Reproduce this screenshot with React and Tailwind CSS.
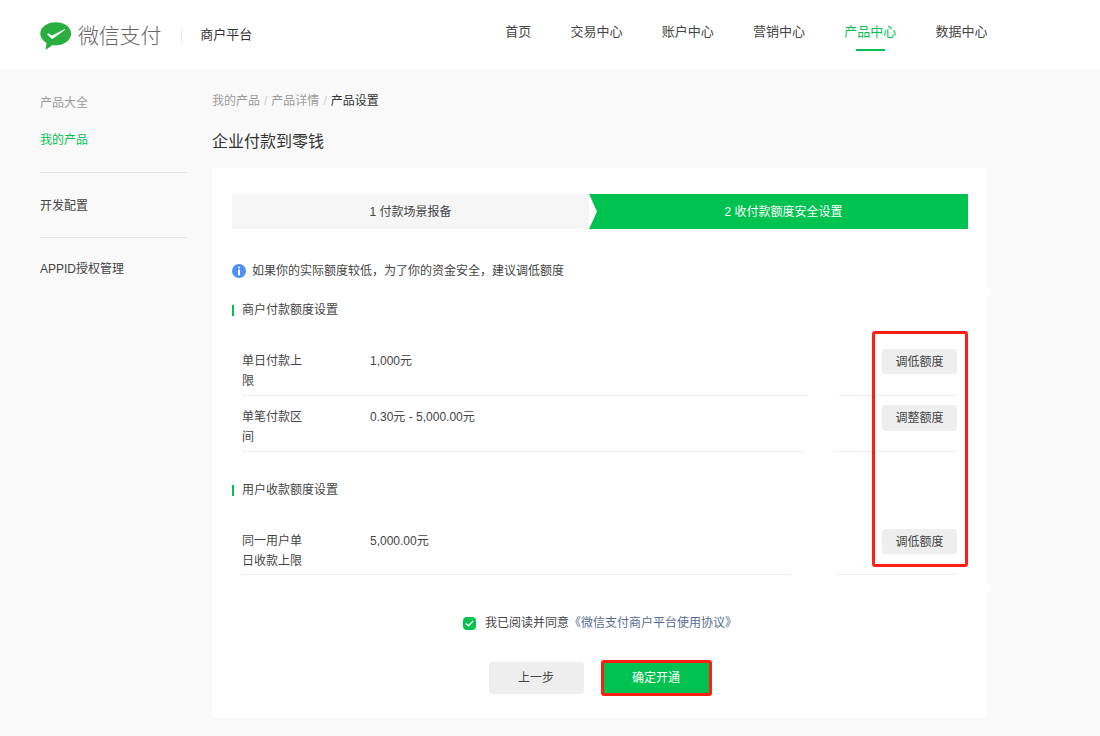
const GREEN = "text-[#00c250]";

const NAV = ["首页", "交易中心", "账户中心", "营销中心", "产品中心", "数据中心"];

const Logo = () => (
  <svg width="32" height="28" viewBox="0 0 32 28" className="shrink-0">
    <path d="M15.7 0.3C7.2 0.3 0.3 5.2 0.3 11.6c0 3.9 2.5 7.2 6.2 9.3l-0.7 5.6c-0.1 0.8 0.5 1 1.1 0.6l5.7-4c1 0.2 2 0.3 3.1 0.3 8.5 0 15.4-5.100 15.400-11.800S24.200 0.300 15.700 0.300z" fill="#2aae3f" />
    <path d="M7 12.200l1.200-1 3.900 2.400L24.700 7l0.600 0.700-12.600 9.100c-0.500 0.300-1 0.200-1.300-0.200z" fill="#fff" />
  </svg>
);

const InfoIcon = () => (
  <svg width="14" height="14" viewBox="0 0 14 14" className="shrink-0">
    <circle cx="7" cy="7" r="7" fill="#4f8ff7" />
    <rect x="6" y="2.600" width="2" height="2" rx="1" fill="#fff" />
    <rect x="6" y="5.600" width="2" height="5.800" fill="#fff" />
  </svg>
);

const SectionTitle = ({ children, className }) => (
  <div className={`flex items-center ${className}`}>
    <span className="w-0.5 h-[11px] bg-[#00c250]" />
    <span className="ml-2 leading-5 text-[#444]">{children}</span>
  </div>
);

// the bottom line of a row is broken in the reference, so it is two pieces
const Row = ({ label, value, action, lineLeft, lineGap, pad }) => (
  <div className="pl-2.5 pr-2.5">
    <div className={`flex items-start ${pad}`}>
      <div className="w-[60px] leading-5 text-[#444] pt-0.5">{label}</div>
      <div className="ml-[68px] flex-1 leading-5 text-[#444] pt-0.5">{value}</div>
      {action}
    </div>
    <div className="flex h-px">
      <div className={`${lineLeft} bg-[#eeeeee]`} />
      <div className={`${lineGap} flex-1 bg-[#eeeeee]`} />
    </div>
  </div>
);

const AdjustButton = ({ children, className }) => (
  <button className={`w-[75px] ${className} bg-[#eeeeee] rounded-[3px] text-[#444] text-xs`}>{children}</button>
);

export default function App() {
  return (
    <div className="w-[1100px] h-[736px] overflow-hidden bg-[#f9f9f9] text-xs font-['Liberation_Sans','Noto_Sans_CJK_SC',sans-serif]">
      {/* Top Bar */}
      <header className="h-[71px] bg-white border-b border-[#f3f3f3] flex items-start pl-10">
        <div className="flex items-center mt-[21px] h-[29px]">
          <Logo />
          <span className="ml-1.5 text-[21px] tracking-[-0.2px] text-[#666] leading-7 font-light">微信支付</span>
          <span className="ml-5 w-px h-3.5 bg-[#e5e5e5]" />
          <span className="ml-[18px] text-[13px] text-[#333] -mt-0.5">商户平台</span>
        </div>
        <nav className="ml-[253px] flex gap-[39.250px] mt-[23px]">
          {NAV.map((item) => (
            <div key={item} className="relative flex flex-col items-center">
              <span className={`text-[13px] leading-[18px] ${item === "产品中心" ? GREEN : "text-[#444]"}`}>{item}</span>
              {item === "产品中心" && <span className="absolute top-[26px] w-[29px] h-0.5 bg-[#00c250]" />}
            </div>
          ))}
        </nav>
      </header>

      <div className="flex pl-10">
        {/* Sidebar */}
        <aside className="w-[147px] shrink-0 pt-[22px]">
          <div className="leading-5 text-[#999]">产品大全</div>
          <div className={`mt-[17px] leading-5 ${GREEN}`}>我的产品</div>
          <div className="mt-[22px] h-px bg-[#e5e5e5]" />
          <div className="mt-[23px] leading-5 text-[#444]">开发配置</div>
          <div className="mt-[21px] h-px bg-[#e5e5e5]" />
          <div className="mt-[21px] leading-5 text-[#444]">APPID授权管理</div>
        </aside>

        {/* Main */}
        <main className="ml-[25px] w-[775px] shrink-0 pt-5">
          <div className="leading-5 text-[#999]">
            我的产品<span className="mx-1 text-[#ccc]">/</span>产品详情<span className="mx-1 text-[#ccc]">/</span><span className="text-[#333]">产品设置</span>
          </div>
          <h1 className="mt-5 text-base leading-[22px] font-normal text-[#333]">企业付款到零钱</h1>

          <div className="relative mt-[15px] h-[550px] bg-white rounded pt-[26px] px-5">
            {/* bumps on the card edge */}
            <span className="absolute -right-1 top-[118px] w-2.5 h-2.5 rounded-full bg-white" />
            <span className="absolute -right-1 top-[414px] w-2.5 h-2.5 rounded-full bg-white" />

            {/* Steps */}
            <div className="flex h-[35px] w-[736px]">
              <div className="w-[357px] bg-[#f5f5f5] flex items-center justify-center text-[#444]">1 付款场景报备</div>
              <div className="flex-1 bg-[#00c250] pl-2.5 flex items-center justify-center text-white [clip-path:polygon(0_0,100%_0,100%_100%,0_100%,8px_50%)]">2 收付款额度安全设置</div>
            </div>

            <div className="mt-8 flex items-center h-5">
              <InfoIcon />
              <span className="ml-1.5 text-[#444]">如果你的实际额度较低，为了你的资金安全，建议调低额度</span>
            </div>

            <SectionTitle className="mt-[19px]">商户付款额度设置</SectionTitle>

            <div className="mt-5">
              <Row label="单日付款上限" value="1,000元" lineLeft="w-[566px]" lineGap="ml-[31px]" pad="pt-[9px] pb-1"
                action={<AdjustButton className="h-[25px]">调低额度</AdjustButton>} />
              <Row label="单笔付款区间" value="0.30元 - 5,000.00元" lineLeft="w-[561px]" lineGap="ml-[30px]" pad="pt-[9px] pb-1"
                action={<AdjustButton className="h-[26px]">调整额度</AdjustButton>} />
            </div>

            <SectionTitle className="mt-7">用户收款额度设置</SectionTitle>

            <div className="mt-[19px]">
              <Row label="同一用户单日收款上限" value="5,000.00元" lineLeft="w-[548px]" lineGap="ml-[46px]" pad="pt-[10px] pb-[3px]"
                action={<AdjustButton className="h-[25px]">调低额度</AdjustButton>} />
            </div>

            {/* Agreement */}
            <div className="mt-[38px] flex items-center justify-center h-5 pl-px">
              <span className="w-[13px] h-[13px] rounded-sm bg-[#00c250] flex items-center justify-center">
                <svg width="9" height="7" viewBox="0 0 9 7">
                  <path d="M0.800 3.400L3.400 5.800L8.200 1" fill="none" stroke="#fff" strokeWidth="1.300" />
                </svg>
              </span>
              <span className="ml-[9px] text-[#444]">我已阅读并同意</span>
              <span className="text-[#576b95]">《微信支付商户平台使用协议》</span>
            </div>

            {/* Actions */}
            <div className="mt-[27px] flex items-center justify-center gap-[17px] pl-px">
              <button className="w-[95px] h-8 bg-[#eeeeee] rounded-[3px] text-xs text-[#444]">上一步</button>
              <button className="w-[111px] h-9 bg-[#00c250] border-[3px] border-[#ff1f12] rounded-[3px] text-xs text-white">确定开通</button>
            </div>

            {/* red annotation */}
            <div className="absolute left-[660px] top-[163px] w-[96px] h-[236px] border-[3px] border-[#ff1f12] rounded-[3px]" />
          </div>
        </main>
      </div>
    </div>
  );
}
